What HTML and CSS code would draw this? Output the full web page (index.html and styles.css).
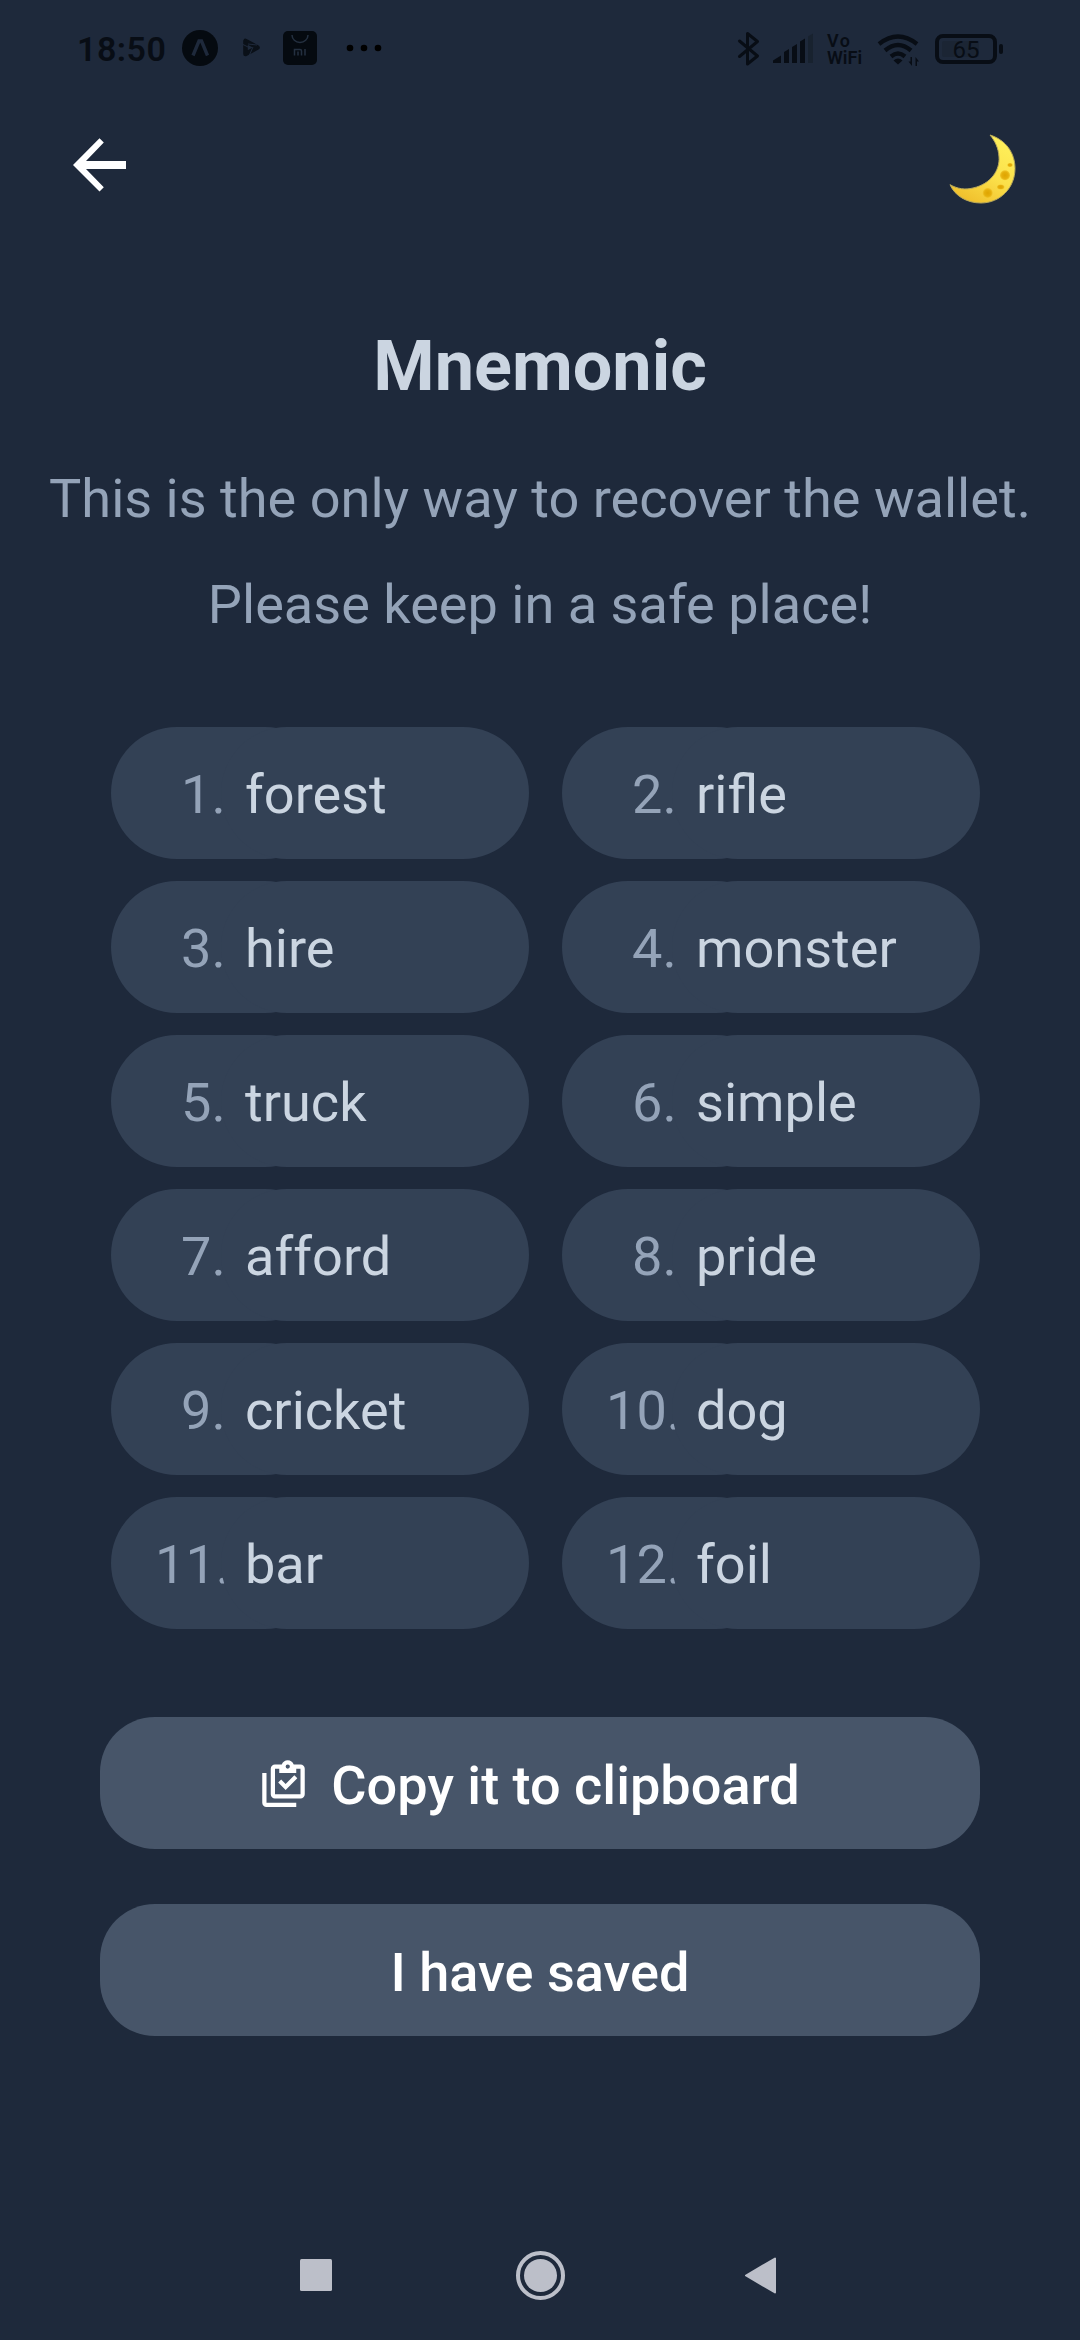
FILE: index.html
```html
<!DOCTYPE html>
<html lang="en">
<head>
<meta charset="utf-8">
<title>Mnemonic</title>
<link rel="stylesheet" href="styles.css">
</head>
<body>
<div class="screen">
  <div class="status">
    <span class="time">18:50</span>
    <svg class="status-left" width="210" height="40" viewBox="178 28 210 40">
      <circle cx="200" cy="48" r="18" fill="#050a10"/>
      <path d="M193 55.5L199 41h2.5L207.500 55.500" fill="none" stroke="#1e293b" stroke-width="3.4"/>
      <path d="M245.500 41v13l12-6.500z" fill="none" stroke="#0a1018" stroke-width="4.600" stroke-linejoin="round"/>
      <path d="M242 44l7 3.500M249 56l4-9M257 45l-9-1" stroke="#1e293b" stroke-width="1"/>
      <rect x="283" y="31" width="34" height="34" rx="5" fill="#050a10"/>
      <path d="M292 35a8 7.500 0 0 0 16 0M294.500 55.500v-6h5.500q1.500 0 1.500 1.500v4.500M298 51.500v4M305 49v6.500" fill="none" stroke="#243040" stroke-width="1.500"/>
      <circle cx="350" cy="48" r="3.300"/><circle cx="364" cy="48" r="3.300"/><circle cx="378" cy="48" r="3.300"/>
    </svg>
    <svg class="status-signal" width="78" height="40" viewBox="736 28 78 40">
      <path d="M739.500 41l18 15-10 8V33.500l10 8-18 15" fill="none" stroke="#080d15" stroke-width="3" stroke-linejoin="round" stroke-linecap="round"/>
      <path d="M773 63v-2.500l8-5V63zM784 63V52l5-3v14zM792 63V47l5-3v19zM800 63V41.500l5-3V63z" fill="#080d15"/>
      <path d="M808 63V36.500l5-3V63z" fill="#18222f"/>
    </svg>
    <div class="vowifi"><span class="vo">Vo</span><span>WiFi</span></div>
    <svg class="status-right" width="130" height="40" viewBox="876 28 130 40">
      <path d="M879 44q19-15 38 0M885 50.500q13-11 26 0M891 56.500q7-6 14 0" fill="none" stroke="#080d15" stroke-width="4.300"/>
      <path d="M893.500 60.500q4.500-4 9 0l-4.500 4z" fill="#080d15"/>
      <path d="M912 57v9l-3.500-4.500h2V57zM915.500 66v-9l3.500 4.500h-2V66z" fill="#080d15"/>
      <rect x="937" y="36" width="58" height="26" rx="6" fill="none" stroke="#080d15" stroke-width="4"/>
      <rect x="942" y="41" width="37" height="16" rx="2" fill="#1b2534"/>
      <text x="966" y="57.500" text-anchor="middle" class="battery">65</text>
      <rect x="999" y="44" width="4" height="10" rx="2" fill="#080d15"/>
    </svg>
  </div>

  <header class="header">
    <svg width="55" height="56" viewBox="72 137 55 56">
      <path d="M73 165L99.500 138.300 103.800 142.500 86 161H126V169H86L103.800 187.300 99.500 191.500z" fill="#fff"/>
    </svg>
    <svg width="70" height="73" viewBox="948 133 70 73">
      <defs><linearGradient id="moon" x1="0.8" y1="0" x2="0.300" y2="1"><stop offset="0" stop-color="#fff15c"/><stop offset="0.550" stop-color="#fbe04a"/><stop offset="1" stop-color="#f0bf2c"/></linearGradient>
      <radialGradient id="crater"><stop offset="0" stop-color="#dfa400"/><stop offset="0.650" stop-color="#e5af0c"/><stop offset="1" stop-color="#f2c62a"/></radialGradient></defs>
      <path d="M990 135C1006 140 1015 153 1015 168.500C1015 188 1000 203 981 203C967 203 955 196 950 184.700C958 189 965 190 973 188C991 184 1000 170 999 157C998.500 148 995 141 990 135z" fill="url(#moon)" stroke="#b9a95a" stroke-width="1"/>
      <circle cx="1005" cy="175.300" r="5" fill="url(#crater)"/><circle cx="987.700" cy="193" r="5" fill="url(#crater)"/>
      <ellipse cx="1000.700" cy="187" rx="3.700" ry="2.500" fill="url(#crater)"/><ellipse cx="1010" cy="165" rx="2.700" ry="2" fill="url(#crater)"/>
    </svg>
  </header>

  <h1 class="title">Mnemonic</h1>
  <p class="note">This is the only way to recover the wallet.<br>Please keep in a safe place!</p>

  <div class="words">
    <div class="word"><span class="num">1.</span><span class="text">forest</span></div>
    <div class="word"><span class="num">2.</span><span class="text">rifle</span></div>
    <div class="word"><span class="num">3.</span><span class="text">hire</span></div>
    <div class="word"><span class="num">4.</span><span class="text">monster</span></div>
    <div class="word"><span class="num">5.</span><span class="text">truck</span></div>
    <div class="word"><span class="num">6.</span><span class="text">simple</span></div>
    <div class="word"><span class="num">7.</span><span class="text">afford</span></div>
    <div class="word"><span class="num">8.</span><span class="text">pride</span></div>
    <div class="word"><span class="num">9.</span><span class="text">cricket</span></div>
    <div class="word"><span class="num wide">10.</span><span class="text">dog</span></div>
    <div class="word"><span class="num wide">11.</span><span class="text">bar</span></div>
    <div class="word"><span class="num wide">12.</span><span class="text">foil</span></div>
  </div>

  <div class="actions">
    <button class="button with-icon">
      <svg class="clip" width="51" height="51" viewBox="0 0 24 24"><path fill="#fff" fill-rule="evenodd" d="M4 7V21H18V23H4C2.900 23 2 22.100 2 21V7H4M20 3C21.100 3 22 3.900 22 5V17C22 18.100 21.100 19 20 19H8C6.900 19 6 18.100 6 17V5C6 3.900 6.900 3 8 3H11.180C11.600 1.840 12.700 1 14 1S16.400 1.840 16.820 3H20M14 3A1 1 0 0 0 14 5A1 1 0 0 0 14 3M10 7V5H8V17H20V5H18V7H10M13 15L9.500 11.500 10.900 10.100 13 12.200 17.100 8.100 18.500 9.500z"/></svg>
      <span>Copy it to clipboard</span>
    </button>
    <button class="button"><span>I have saved</span></button>
  </div>

  <nav class="nav">
    <svg width="480" height="52" viewBox="298 2250 480 52" fill="#bcbfc9">
      <rect x="300" y="2259" width="32" height="32" rx="1.500"/>
      <circle cx="540.500" cy="2275.500" r="22.500" fill="none" stroke="#bcbfc9" stroke-width="4"/>
      <circle cx="540.500" cy="2275.500" r="16.500"/>
      <path d="M746 2275.500L775 2258.500V2292.500z" stroke="#bcbfc9" stroke-width="2" stroke-linejoin="round"/>
    </svg>
  </nav>
</div>
</body>
</html>
```
FILE: styles.css
```css
* { box-sizing: border-box; }
body { margin: 0; background: #1e293b; font-family: Roboto, "Liberation Sans", sans-serif; }
svg { display: block; flex: none; }
.screen { width: 1080px; height: 2340px; display: flex; flex-direction: column; background: #1e293b; overflow: hidden; }
.status { height: 96px; padding: 0 74px 0 77px; display: flex; align-items: center; color: #080d15; }
.time { width: 101px; font-size: 34px; font-weight: 600; line-height: 40px; letter-spacing: 0.5px; padding-top: 1px; }
.status-signal { margin-left: auto; }
.vowifi { width: 40px; margin: 1px 9px 0 13px; display: flex; flex-direction: column; font-size: 18px; font-weight: 600; line-height: 17px; }
.vo { letter-spacing: 1.5px; }
.battery { font-size: 24px; font-weight: 400; fill: #080d15; }
.header { height: 222px; padding: 37px 62px 0 72px; display: flex; justify-content: space-between; align-items: flex-start; }
.header svg:first-child { margin-top: 4px; }
.title { margin: 0; font-size: 70.2px; font-weight: 700; line-height: 96px; text-align: center; color: #cbd5e1; }
.note { margin: 32px 0 0; font-size: 54.1px; line-height: 106px; text-align: center; color: #94a3b8; white-space: nowrap; }
.words { margin: 69px 100px 0 111px; display: grid; grid-template-columns: 418px 418px; column-gap: 33px; row-gap: 22px; }
.word { display: flex; height: 132px; font-size: 54.1px; line-height: 132px; }
.num, .text { height: 132px; padding-top: 2px; border-radius: 66px; background: #334155; }
.num { width: 220px; padding-left: 70px; color: #94a3b8; }
.num.wide { padding-left: 44px; }
.text { width: 308px; margin-left: -110px; padding-left: 24px; color: #cbd5e1; }
.actions { margin: 88px 100px 0; display: flex; flex-direction: column; gap: 55px; }
.button { height: 132px; padding: 6px 0 0; border: 0; border-radius: 55px; background: #475569; color: #fff; font: 500 54.1px/126px Roboto, "Liberation Sans", sans-serif; display: flex; justify-content: center; align-items: center; gap: 22px; }
.with-icon { padding-right: 22px; }
.clip { margin-bottom: 5px; }
.nav { margin-top: auto; height: 90px; padding-left: 298px; }
```
